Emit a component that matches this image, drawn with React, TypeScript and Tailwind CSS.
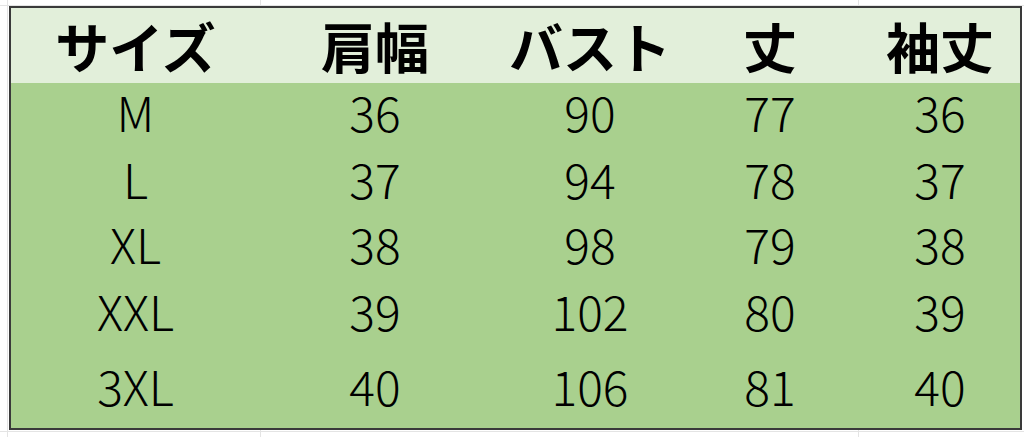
import React from "react";

const headers = ["サイズ", "肩幅", "バスト", "丈", "袖丈"];
const rows: { h: string; cells: string[] }[] = [
  { h: "h-[71px]", cells: ["M", "36", "90", "77", "36"] },
  { h: "h-[65px]", cells: ["L", "37", "94", "78", "37"] },
  { h: "h-[66px]", cells: ["XL", "38", "98", "79", "38"] },
  { h: "h-[68px]", cells: ["XXL", "39", "102", "80", "39"] },
  { h: "h-[75px]", cells: ["3XL", "40", "106", "81", "40"] },
];

const cols = "grid grid-cols-[249px_230px_200px_160px_170px]";

export default function App() {
  return (
    <div
      className="w-[1024px] h-[437px] overflow-hidden bg-white bg-[linear-gradient(to_right,transparent_7px,#e4e4e4_7px,#e4e4e4_8px,transparent_8px,transparent_260px,#e4e4e4_260px,#e4e4e4_261px,transparent_261px,transparent_858px,#e4e4e4_858px,#e4e4e4_859px,transparent_859px),linear-gradient(to_bottom,transparent_5px,#e4e4e4_5px,#e4e4e4_6px,transparent_6px,transparent_431px,#e4e4e4_431px,#e4e4e4_432px,transparent_432px)] pl-[9px] pt-[6px]"
      style={{ fontFamily: '"Noto Sans CJK JP", "Noto Sans", sans-serif' }}
    >
      <div className="w-[1013px] h-[424px] border-2 border-[#3a3a3a] bg-[#a9d08e]">
        <div className={`${cols} h-[75px] bg-[#e2efda]`}>
          {headers.map((t, i) => (
            <div
              key={i}
              className={`flex items-center justify-center text-[54px] leading-none font-bold text-black ${
                i === 4 ? "pl-[10px]" : ""
              }`}
            >
              {t}
            </div>
          ))}
        </div>
        {rows.map((r, ri) => (
          <div key={ri} className={`${cols} ${r.h}`}>
            {r.cells.map((c, ci) => (
              <div
                key={ci}
                className={`flex items-end justify-center pb-[19px] text-[48px] leading-none font-light text-black ${
                  ci === 4 ? "pl-[10px]" : ""
                }`}
              >
                {c}
              </div>
            ))}
          </div>
        ))}
      </div>
    </div>
  );
}
